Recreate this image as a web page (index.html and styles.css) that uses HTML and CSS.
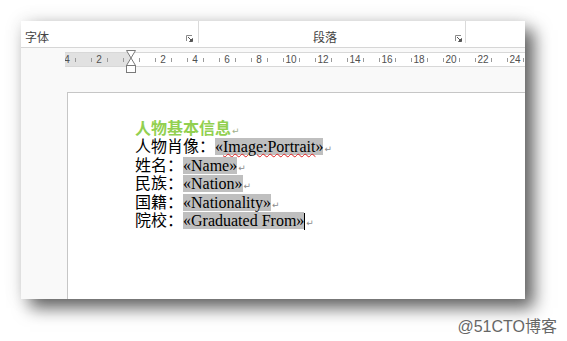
FILE: index.html
```html
<!DOCTYPE html>
<html>
<head lang="zh">
    <meta charset="UTF-8">
    <title>人物基本信息</title>
    <link rel="stylesheet" href="styles.css">
</head>
<body>
<div class="window">
    <div class="ribbon">
        <div class="group group-font">
            <span class="group-label">字体</span>
            <svg class="launcher" width="7" height="7" viewBox="0 0 7 7">
                <path d="M0.5 6V0.5H6" fill="none" stroke="#8a8a8a"/>
                <path d="M2 2L6 6M3.5 6.5H6.5V3.5Z" fill="#555" stroke="#555" stroke-width="1"/>
            </svg>
        </div>
        <div class="group group-para">
            <span class="group-label">段落</span>
            <svg class="launcher" width="7" height="7" viewBox="0 0 7 7">
                <path d="M0.5 6V0.5H6" fill="none" stroke="#8a8a8a"/>
                <path d="M2 2L6 6M3.5 6.5H6.5V3.5Z" fill="#555" stroke="#555" stroke-width="1"/>
            </svg>
        </div>
        <div class="group group-rest"></div>
    </div>
    <div class="ruler">
        <div class="ruler-track">
            <div class="ruler-scale">
                <span>4</span><span></span><span>2</span><span></span><span></span>
                <span></span><span>2</span><span></span><span>4</span><span></span>
                <span>6</span><span></span><span>8</span><span></span><span>10</span>
                <span></span><span>12</span><span></span><span>14</span><span></span>
                <span>16</span><span></span><span>18</span><span></span><span>20</span>
                <span></span><span>22</span><span></span><span>24</span>
            </div>
        </div>
        <!-- 缩进标记 -->
        <svg class="indent-marker" width="11" height="24" viewBox="0 0 11 24">
            <polygon points="0.5,0.5 9.5,0.5 5,8" fill="#fff" stroke="#7a7a7a"/>
            <polygon points="5,8 9.5,15.5 0.5,15.5" fill="#fff" stroke="#7a7a7a"/>
            <rect x="0.5" y="15.5" width="9" height="7" fill="#fff" stroke="#7a7a7a"/>
        </svg>
    </div>
    <div class="doc-area">
        <div class="page">
            <p class="title">人物基本信息<span class="mark">↵</span></p>
            <p class="line">人物肖像：<span class="field">«<span class="typo">Image:Portrait</span>»</span><span class="mark">↵</span></p>
            <p class="line">姓名：<span class="field">«Name»</span><span class="mark">↵</span></p>
            <p class="line">民族：<span class="field">«Nation»</span><span class="mark">↵</span></p>
            <p class="line">国籍：<span class="field">«Nationality»</span><span class="mark">↵</span></p>
            <p class="line">院校：<span class="field">«Graduated From»</span><span class="caret"></span><span class="mark">↵</span></p>
        </div>
    </div>
</div>
<div class="watermark">@51CTO博客</div>
</body>
</html>
```

FILE: styles.css
```css
* {
    margin: 0;
    padding: 0;
    box-sizing: border-box;
}

body {
    width: 567px;
    height: 341px;
    background-color: #fff;
    position: relative;
    overflow: hidden;
    font-family: "Liberation Sans", "Noto Sans CJK SC", sans-serif;
}

.window {
    width: 504px;
    height: 278px;
    margin: 21px 0 0 21px;
    display: flex;
    flex-direction: column;
    background-color: #f9f9f9;
    box-shadow: 9px 9px 16px rgba(0, 0, 0, 0.6), 0 0 18px rgba(0, 0, 0, 0.1);
}

/* 功能区 */
.ribbon {
    height: 27px;
    display: flex;
    background-color: #fff;
    border-bottom: 1px solid #d6d6d6;
}

.group {
    display: flex;
    align-items: flex-end;
    padding-bottom: 2px;
    background: linear-gradient(#dadada, #dadada) right top / 1px 22px no-repeat;
}

.group-label {
    font-size: 12px;
    line-height: 14px;
    color: #444;
}

.launcher {
    margin-bottom: 3px;
}

.group-font {
    width: 178px;
    padding-left: 4px;
    padding-right: 6px;
    justify-content: space-between;
}

.group-para {
    width: 267px;
    padding-right: 4px;
}

.group-para .group-label {
    flex: 1;
    text-align: center;
    padding-right: 4px;
}

.group-rest {
    flex: 1;
    background: none;
}

/* 标尺 */
.ruler {
    position: relative;
    height: 15px;
    margin: 4px 0 0 44px;
    border-top: 1px solid #d8d8d8;
    border-bottom: 1px solid #d8d8d8;
    background: linear-gradient(to right, #e1e1e1 66px, #fff 66px);
}

.ruler-track {
    height: 13px;
    overflow: hidden;
}

.ruler-scale {
    display: flex;
    margin-left: -6px;
    height: 13px;
    background: repeating-linear-gradient(to right, #9a9a9a 0 1px, transparent 1px 16px) 0 center / 100% 4px no-repeat;
}

.ruler-scale span {
    flex: none;
    width: 16px;
    text-align: center;
    font-size: 10px;
    line-height: 13px;
    color: #505050;
}

.indent-marker {
    position: absolute;
    left: 61px;
    top: -3px;
}

/* 文档区 */
.doc-area {
    flex: 1;
    display: flex;
    padding: 25px 0 0 46px;
    overflow: hidden;
}

.page {
    flex: 1;
    background-color: #fff;
    border-left: 1px solid #c6c6c6;
    border-top: 1px solid #c6c6c6;
    padding: 23px 0 0 67px;
    font-family: "Liberation Serif", "Noto Sans CJK SC", serif;
    font-size: 16px;
    color: #000;
}

.title {
    line-height: 22px;
    font-family: "Noto Sans CJK SC", sans-serif;
    font-weight: bold;
    font-size: 16px;
    color: #92d050;
}

.line {
    line-height: 18.5px;
    white-space: nowrap;
}

.field {
    background-color: #bfbfbf;
}

.typo {
    text-decoration: underline wavy #e02020;
    text-decoration-thickness: 1px;
    text-underline-offset: 1px;
}

.mark {
    font-family: "DejaVu Sans", sans-serif;
    font-size: 9px;
    line-height: 0;
    font-weight: normal;
    color: #8c8c8c;
    margin-left: 1px;
}

.title .mark {
    color: #9fb08a;
}

.caret {
    display: inline-block;
    width: 1px;
    height: 17px;
    background-color: #000;
    vertical-align: -4px;
}

.watermark {
    position: absolute;
    right: 10px;
    top: 313px;
    font-size: 16px;
    color: #666;
    text-shadow: 0 0 1px #fff;
}
```
